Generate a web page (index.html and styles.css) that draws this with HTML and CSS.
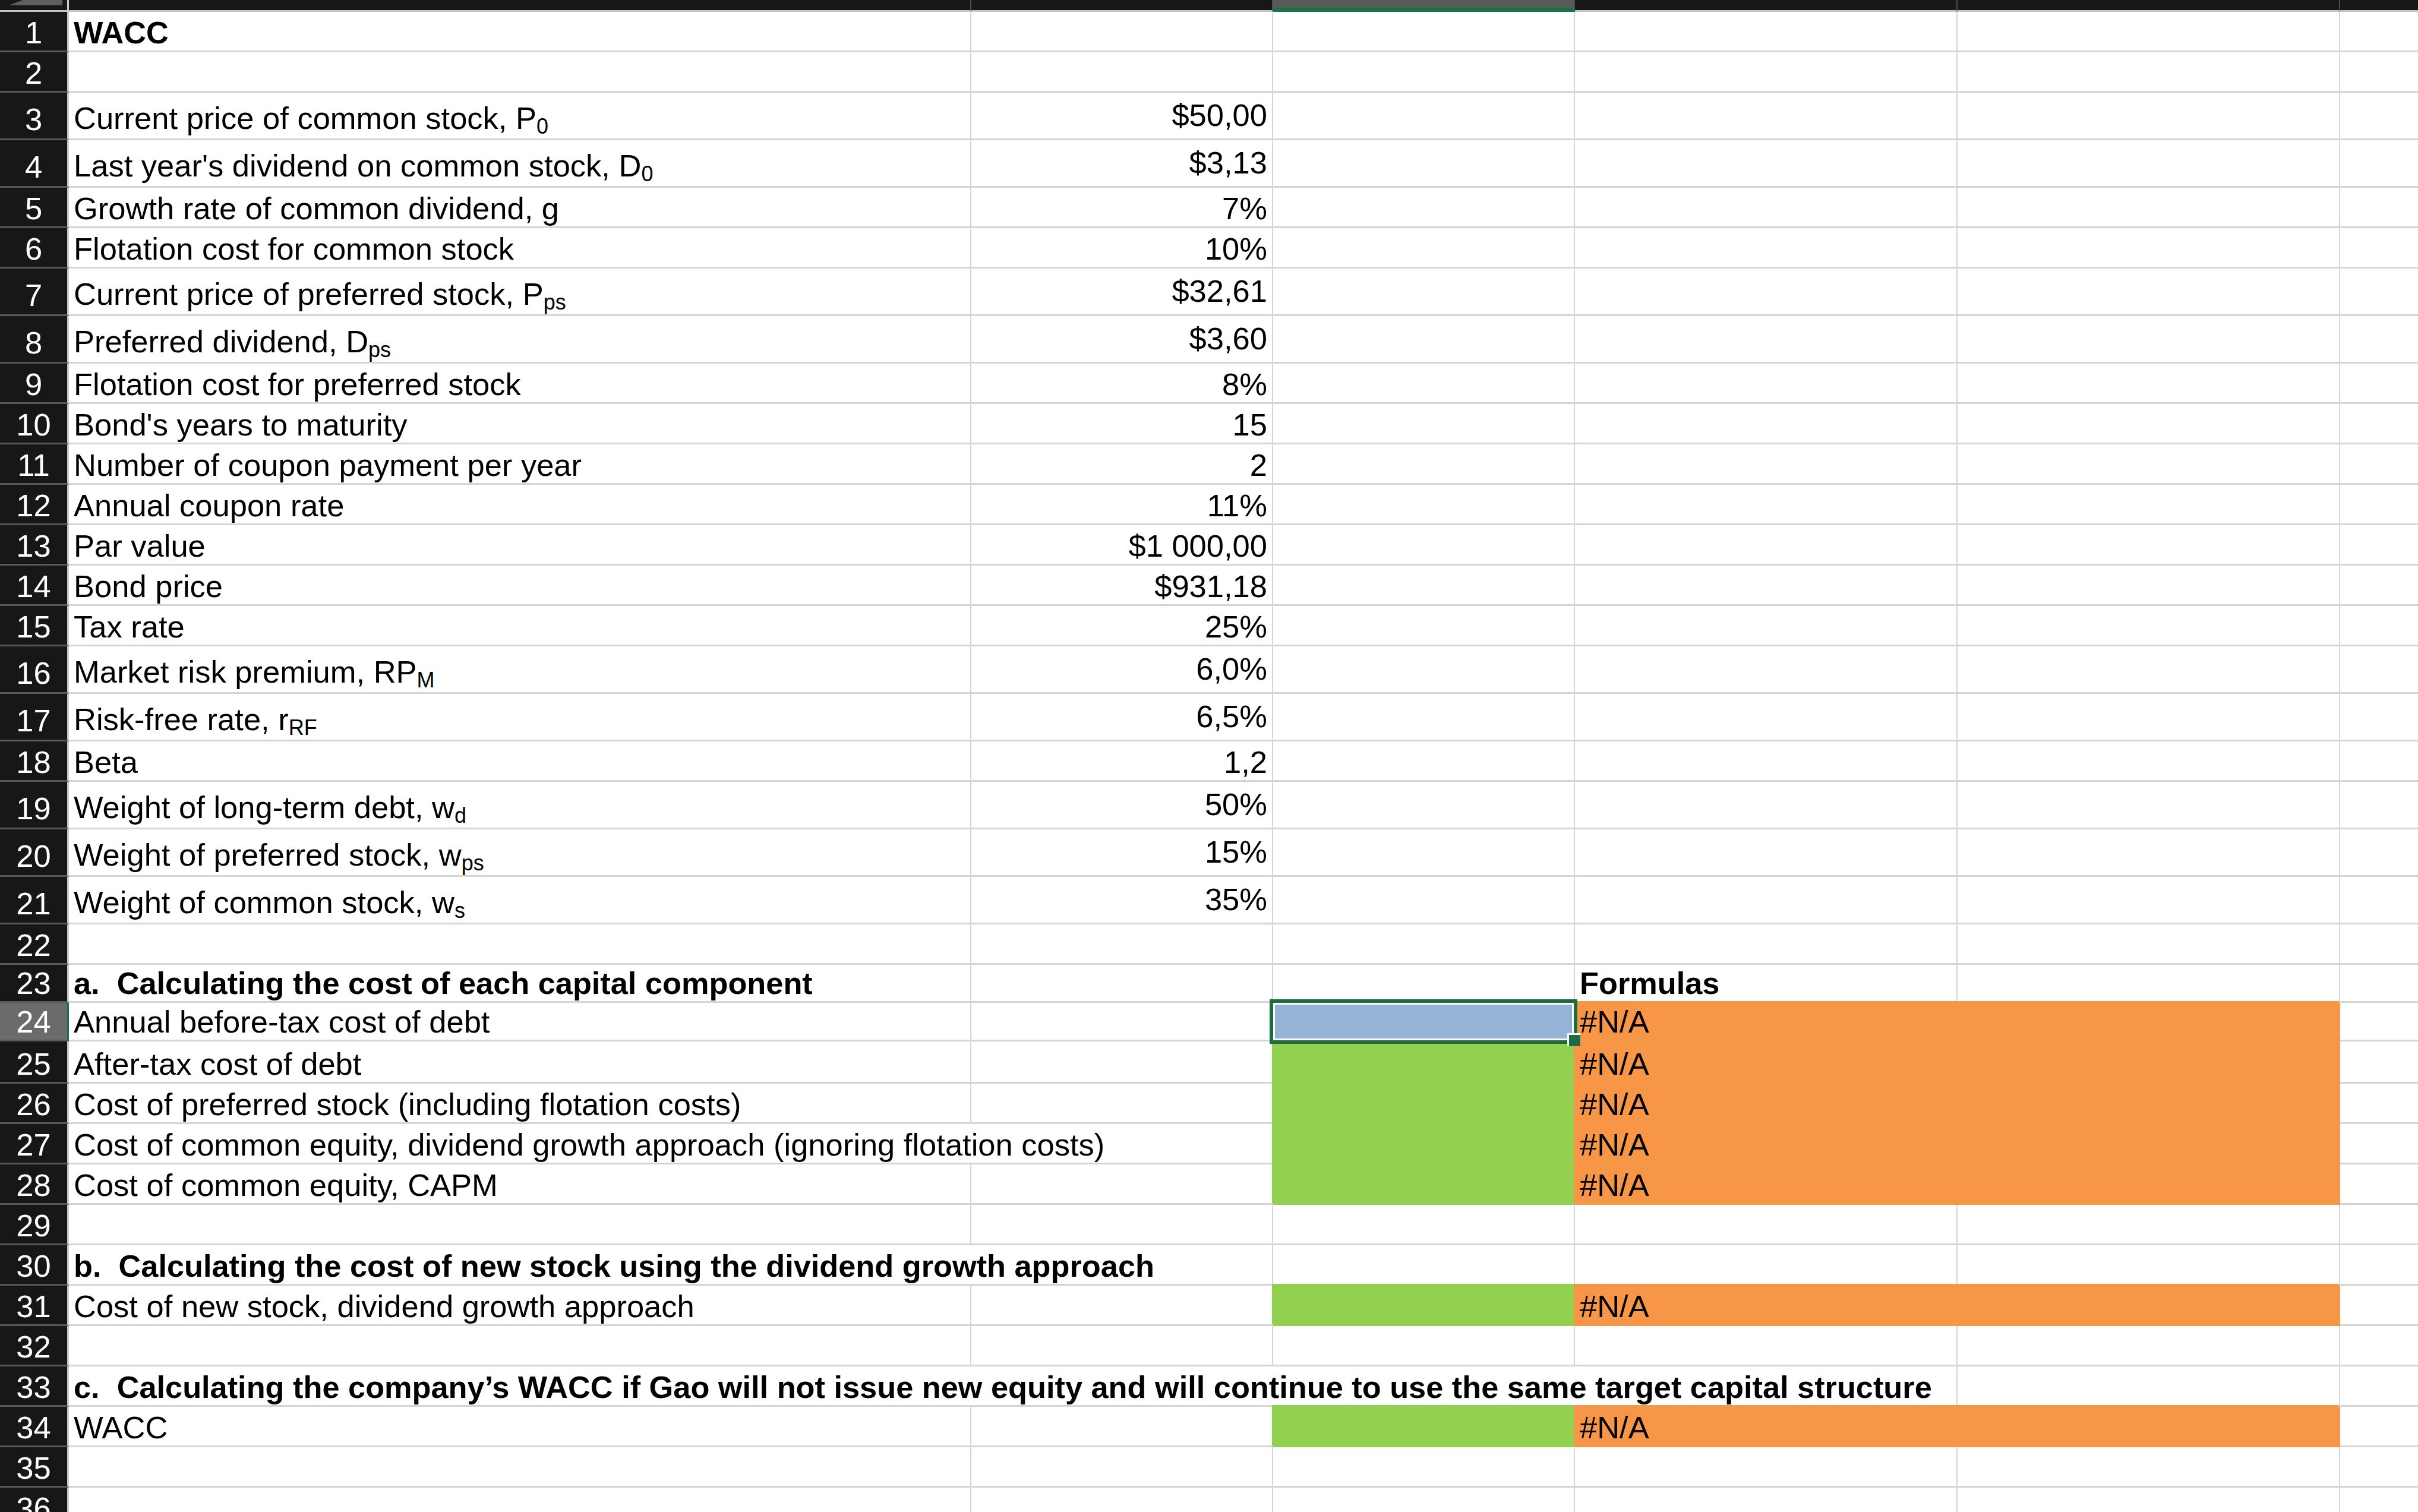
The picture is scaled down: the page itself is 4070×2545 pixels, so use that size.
FILE: index.html
```html
<!DOCTYPE html>
<html lang="en">
<head>
<meta charset="utf-8">
<title>WACC</title>
<link rel="stylesheet" href="styles.css">
</head>
<body>
<div class="sheet">
  <div class="row hdr">
    <div class="c rh corner"><svg class="tri" width="113" height="17" viewBox="0 0 113 17"><polygon points="15,9 105,9 105,0 38,0" fill="#5e5e5e"/></svg></div>
    <div class="c ca"></div>
    <div class="c cb"></div>
    <div class="c cc on"></div>
    <div class="c cd"></div>
    <div class="c ce"></div>
    <div class="c cf"></div>
  </div>

  <div class="row"><div class="c rh"><span>1</span></div><div class="c ca b"><span>WACC</span></div><div class="c cb"></div><div class="c cc"></div><div class="c cd"></div><div class="c ce"></div><div class="c cf"></div></div>
  <div class="row"><div class="c rh"><span>2</span></div><div class="c ca"></div><div class="c cb"></div><div class="c cc"></div><div class="c cd"></div><div class="c ce"></div><div class="c cf"></div></div>
  <div class="row t"><div class="c rh"><span>3</span></div><div class="c ca lbl"><span>Current price of common stock, P<sub>0</sub></span></div><div class="c cb num"><span>$50,00</span></div><div class="c cc"></div><div class="c cd"></div><div class="c ce"></div><div class="c cf"></div></div>
  <div class="row t"><div class="c rh"><span>4</span></div><div class="c ca lbl"><span>Last year's dividend on common stock, D<sub>0</sub></span></div><div class="c cb num"><span>$3,13</span></div><div class="c cc"></div><div class="c cd"></div><div class="c ce"></div><div class="c cf"></div></div>
  <div class="row"><div class="c rh"><span>5</span></div><div class="c ca lbl"><span>Growth rate of common dividend, g</span></div><div class="c cb num"><span>7%</span></div><div class="c cc"></div><div class="c cd"></div><div class="c ce"></div><div class="c cf"></div></div>
  <div class="row"><div class="c rh"><span>6</span></div><div class="c ca lbl"><span>Flotation cost for common stock</span></div><div class="c cb num"><span>10%</span></div><div class="c cc"></div><div class="c cd"></div><div class="c ce"></div><div class="c cf"></div></div>
  <div class="row t"><div class="c rh"><span>7</span></div><div class="c ca lbl"><span>Current price of preferred stock, P<sub>ps</sub></span></div><div class="c cb num"><span>$32,61</span></div><div class="c cc"></div><div class="c cd"></div><div class="c ce"></div><div class="c cf"></div></div>
  <div class="row t"><div class="c rh"><span>8</span></div><div class="c ca lbl"><span>Preferred dividend, D<sub>ps</sub></span></div><div class="c cb num"><span>$3,60</span></div><div class="c cc"></div><div class="c cd"></div><div class="c ce"></div><div class="c cf"></div></div>
  <div class="row"><div class="c rh"><span>9</span></div><div class="c ca lbl"><span>Flotation cost for preferred stock</span></div><div class="c cb num"><span>8%</span></div><div class="c cc"></div><div class="c cd"></div><div class="c ce"></div><div class="c cf"></div></div>
  <div class="row"><div class="c rh"><span>10</span></div><div class="c ca lbl"><span>Bond's years to maturity</span></div><div class="c cb num"><span>15</span></div><div class="c cc"></div><div class="c cd"></div><div class="c ce"></div><div class="c cf"></div></div>
  <div class="row"><div class="c rh"><span>11</span></div><div class="c ca lbl"><span>Number of coupon payment per year</span></div><div class="c cb num"><span>2</span></div><div class="c cc"></div><div class="c cd"></div><div class="c ce"></div><div class="c cf"></div></div>
  <div class="row"><div class="c rh"><span>12</span></div><div class="c ca lbl"><span>Annual coupon rate</span></div><div class="c cb num"><span>11%</span></div><div class="c cc"></div><div class="c cd"></div><div class="c ce"></div><div class="c cf"></div></div>
  <div class="row"><div class="c rh"><span>13</span></div><div class="c ca lbl"><span>Par value</span></div><div class="c cb num"><span>$1 000,00</span></div><div class="c cc"></div><div class="c cd"></div><div class="c ce"></div><div class="c cf"></div></div>
  <div class="row"><div class="c rh"><span>14</span></div><div class="c ca lbl"><span>Bond price</span></div><div class="c cb num"><span>$931,18</span></div><div class="c cc"></div><div class="c cd"></div><div class="c ce"></div><div class="c cf"></div></div>
  <div class="row"><div class="c rh"><span>15</span></div><div class="c ca lbl"><span>Tax rate</span></div><div class="c cb num"><span>25%</span></div><div class="c cc"></div><div class="c cd"></div><div class="c ce"></div><div class="c cf"></div></div>
  <div class="row t"><div class="c rh"><span>16</span></div><div class="c ca lbl"><span>Market risk premium, RP<sub>M</sub></span></div><div class="c cb num"><span>6,0%</span></div><div class="c cc"></div><div class="c cd"></div><div class="c ce"></div><div class="c cf"></div></div>
  <div class="row t"><div class="c rh"><span>17</span></div><div class="c ca lbl"><span>Risk-free rate, r<sub>RF</sub></span></div><div class="c cb num"><span>6,5%</span></div><div class="c cc"></div><div class="c cd"></div><div class="c ce"></div><div class="c cf"></div></div>
  <div class="row"><div class="c rh"><span>18</span></div><div class="c ca lbl"><span>Beta</span></div><div class="c cb num"><span>1,2</span></div><div class="c cc"></div><div class="c cd"></div><div class="c ce"></div><div class="c cf"></div></div>
  <div class="row t"><div class="c rh"><span>19</span></div><div class="c ca lbl"><span>Weight of long-term debt, w<sub>d</sub></span></div><div class="c cb num"><span>50%</span></div><div class="c cc"></div><div class="c cd"></div><div class="c ce"></div><div class="c cf"></div></div>
  <div class="row t"><div class="c rh"><span>20</span></div><div class="c ca lbl"><span>Weight of preferred stock, w<sub>ps</sub></span></div><div class="c cb num"><span>15%</span></div><div class="c cc"></div><div class="c cd"></div><div class="c ce"></div><div class="c cf"></div></div>
  <div class="row t"><div class="c rh"><span>21</span></div><div class="c ca lbl"><span>Weight of common stock, w<sub>s</sub></span></div><div class="c cb num"><span>35%</span></div><div class="c cc"></div><div class="c cd"></div><div class="c ce"></div><div class="c cf"></div></div>
  <div class="row"><div class="c rh"><span>22</span></div><div class="c ca"></div><div class="c cb"></div><div class="c cc"></div><div class="c cd"></div><div class="c ce"></div><div class="c cf"></div></div>
  <div class="row h64"><div class="c rh"><span>23</span></div><div class="c ca b"><span>a.  Calculating the cost of each capital component</span></div><div class="c cb"></div><div class="c cc"></div><div class="c cd b"><span>Formulas</span></div><div class="c ce"></div><div class="c cf"></div></div>
  <div class="row h65 selrow"><div class="c rh"><span>24</span></div><div class="c ca"><span>Annual before-tax cost of debt</span></div><div class="c cb"></div><div class="c cc active"><div class="selbox"></div><div class="handle"></div></div><div class="c de o"><span>#N/A</span></div><div class="c cf"></div></div>
  <div class="row h71"><div class="c rh"><span>25</span></div><div class="c ca"><span>After-tax cost of debt</span></div><div class="c cb"></div><div class="c cc g"></div><div class="c de o"><span>#N/A</span></div><div class="c cf"></div></div>
  <div class="row"><div class="c rh"><span>26</span></div><div class="c ca"><span>Cost of preferred stock (including flotation costs)</span></div><div class="c cb"></div><div class="c cc g"></div><div class="c de o"><span>#N/A</span></div><div class="c cf"></div></div>
  <div class="row"><div class="c rh"><span>27</span></div><div class="c ab"><span>Cost of common equity, dividend growth approach (ignoring flotation costs)</span></div><div class="c cc g"></div><div class="c de o"><span>#N/A</span></div><div class="c cf"></div></div>
  <div class="row"><div class="c rh"><span>28</span></div><div class="c ca"><span>Cost of common equity, CAPM</span></div><div class="c cb"></div><div class="c cc g"></div><div class="c de o"><span>#N/A</span></div><div class="c cf"></div></div>
  <div class="row"><div class="c rh"><span>29</span></div><div class="c ca"></div><div class="c cb"></div><div class="c cc"></div><div class="c cd"></div><div class="c ce"></div><div class="c cf"></div></div>
  <div class="row"><div class="c rh"><span>30</span></div><div class="c ab b"><span>b.  Calculating the cost of new stock using the dividend growth approach</span></div><div class="c cc"></div><div class="c cd"></div><div class="c ce"></div><div class="c cf"></div></div>
  <div class="row"><div class="c rh"><span>31</span></div><div class="c ca"><span>Cost of new stock, dividend growth approach</span></div><div class="c cb"></div><div class="c cc g"></div><div class="c de o"><span>#N/A</span></div><div class="c cf"></div></div>
  <div class="row"><div class="c rh"><span>32</span></div><div class="c ca"></div><div class="c cb"></div><div class="c cc"></div><div class="c cd"></div><div class="c ce"></div><div class="c cf"></div></div>
  <div class="row"><div class="c rh"><span>33</span></div><div class="c ad b"><span>c.  Calculating the company’s WACC if Gao will not issue new equity and will continue to use the same target capital structure</span></div><div class="c ce"></div><div class="c cf"></div></div>
  <div class="row"><div class="c rh"><span>34</span></div><div class="c ca"><span>WACC</span></div><div class="c cb"></div><div class="c cc g"></div><div class="c de o"><span>#N/A</span></div><div class="c cf"></div></div>
  <div class="row"><div class="c rh"><span>35</span></div><div class="c ca"></div><div class="c cb"></div><div class="c cc"></div><div class="c cd"></div><div class="c ce"></div><div class="c cf"></div></div>
  <div class="row"><div class="c rh"><span>36</span></div><div class="c ca"></div><div class="c cb"></div><div class="c cc"></div><div class="c cd"></div><div class="c ce"></div><div class="c cf"></div></div>
</div>
</body>
</html>
```

FILE: styles.css
```css
* { box-sizing: border-box; }
html, body { margin: 0; padding: 0; }
body {
  width: 4070px;
  height: 2545px;
  overflow: hidden;
  background: #ffffff;
  font-family: "Liberation Sans", Arial, Helvetica, sans-serif;
  font-size: 52.5px;
  color: #000000;
}
.sheet { display: flex; flex-direction: column; width: 4070px; }

.row { display: flex; flex: none; height: 68px; }
.row.t { height: 80px; }
.row.h64 { height: 64px; }
.row.h65 { height: 65px; }
.row.h71 { height: 71px; }

.c {
  flex: none;
  display: flex;
  align-items: flex-end;
  padding: 0 8px 4px;
  border-right: 2px solid #d5d5d5;
  border-bottom: 3px solid #d5d5d5;
  line-height: 52px;
  white-space: pre;
}
.c > span { display: block; }

.rh {
  width: 116px;
  justify-content: center;
  padding: 0 0 4px;
  background: #171717;
  color: #ffffff;
  border-right: 3px solid #c9c9c9;
  border-bottom-color: #585858;
}
.t .rh { padding-bottom: 6px; }
.t .lbl { padding-bottom: 8px; }
.t .num { padding-bottom: 13px; }

.ca { width: 1519px; }
.cb { width: 508px; }
.cc { width: 508px; }
.cd { width: 644px; }
.ce { width: 644px; }
.cf { width: 700px; }
.ab { width: 2027px; }
.ad { width: 3179px; }
.de { width: 1288px; }

.num { justify-content: flex-end; }
.b { font-weight: bold; font-size: 52.3px; }

sub {
  font-size: 36px;
  line-height: 0;
  vertical-align: -8px;
}

/* column header bar */
.hdr { height: 20px; }
.hdr .c {
  background: #171717;
  border-right: 2px solid #4e4e4e;
  border-bottom: 3px solid #c6c6c6;
  padding: 0;
}
.hdr .rh {
  align-items: flex-start;
  justify-content: flex-start;
  border-right: 3px solid #c9c9c9;
}
.tri { display: block; }
.hdr .cc.on {
  background: #5a5a5a;
  border-bottom: 7px solid #1e7145;
}

/* fills */
.g {
  background: #92d050;
  border-color: #92d050;
  box-shadow: -2px -3px 0 0 #92d050;
}
.o {
  background: #f79646;
  border-color: #f79646;
  box-shadow: -2px -3px 0 0 #f79646;
}

/* selected row header */
.selrow .rh {
  background: #6b6b6b;
  border-right-color: #1e7145;
}

/* active cell C24 */
.active { position: relative; }
.selbox {
  position: absolute;
  left: -6px;
  top: -6px;
  width: 518px;
  height: 75px;
  border: 6px solid #1e6b41;
  background: #95b3d7;
  box-shadow: inset 0 0 0 3px #ffffff;
}
.handle {
  position: absolute;
  left: 495px;
  top: 51px;
  width: 22px;
  height: 22px;
  background: #1e6b41;
  border: 3px solid #ffffff;
  border-right-width: 0;
  border-bottom-width: 0;
}
```
